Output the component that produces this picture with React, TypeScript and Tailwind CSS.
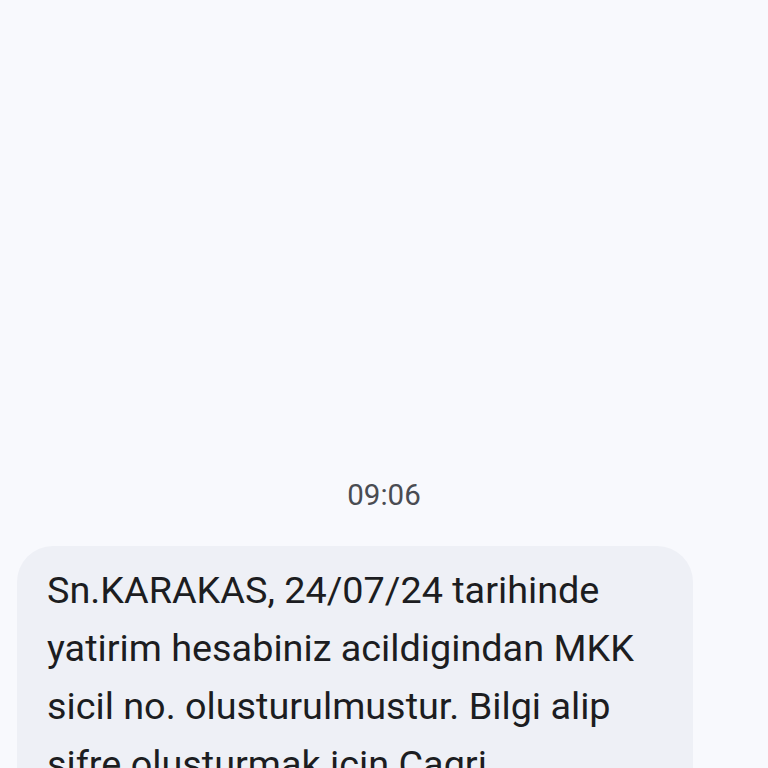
export default function App() {
  return (
    <div className="w-[768px] h-[768px] overflow-hidden bg-[#f8f9fd] flex flex-col" style={{ fontFamily: "Roboto, 'Noto Sans', sans-serif" }}>
      <div className="h-[476px] shrink-0" />
      <div className="text-center text-[29.5px] leading-[38px] text-[#4a4c52]">09:06</div>
      <div className="h-[32px] shrink-0" />
      <div className="ml-[17px] w-[676px] rounded-[36px] bg-[#eef0f6] pl-[30px] pr-[10px] pt-[15px] pb-[20px] text-[37.8px] leading-[58px] text-[#1c1d21] whitespace-nowrap">
        Sn.KARAKAS, 24/07/24 tarihinde<br />
        yatirim hesabiniz acildigindan MKK<br />
        sicil no. olusturulmustur. Bilgi alip<br />
        sifre olusturmak icin Cagri<br />
        Merkezimizi arayabilirsiniz.
      </div>
    </div>
  );
}
